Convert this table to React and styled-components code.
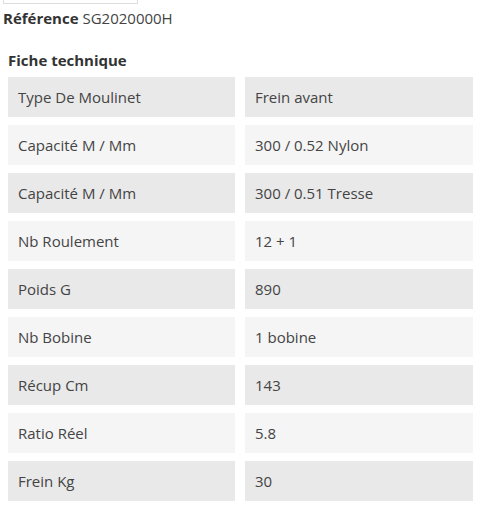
import styled, { createGlobalStyle } from "styled-components";

const Global = createGlobalStyle`
  body {
    margin: 0;
    background: #fff;
    font-family: "Open Sans", "Noto Sans", sans-serif;
    color: #444;
  }
`;

const Page = styled.div`
  width: 487px;
  padding: 0 0 0 3px;
  box-sizing: border-box;
`;

const InputEdge = styled.div`
  width: 133px;
  height: 3px;
  border: 1px solid #ddd;
  border-top: none;
`;

const Reference = styled.div`
  font-size: 15px;
  line-height: 22px;
  margin-top: 3px;
  color: #444;

  strong {
    font-weight: 700;
    color: #333;
  }
`;

const Section = styled.section`
  padding-left: 5px;
  margin-top: 20px;
`;

const Title = styled.h3`
  margin: 0 0 6px;
  font-size: 15px;
  line-height: 22px;
  font-weight: 700;
  color: #333;
`;

const Table = styled.div`
  display: grid;
  grid-template-columns: 227px 228px;
  column-gap: 10px;
  row-gap: 8px;
`;

const Cell = styled.div`
  height: 40px;
  display: flex;
  align-items: center;
  padding-left: 10px;
  font-size: 15px;
  color: #444;
  background: ${(p) => (p.$odd ? "#e9e9e9" : "#f5f5f5")};
`;

const rows = [
  ["Type De Moulinet", "Frein avant"],
  ["Capacité M / Mm", "300 / 0.52 Nylon"],
  ["Capacité M / Mm", "300 / 0.51 Tresse"],
  ["Nb Roulement", "12 + 1"],
  ["Poids G", "890"],
  ["Nb Bobine", "1 bobine"],
  ["Récup Cm", "143"],
  ["Ratio Réel", "5.8"],
  ["Frein Kg", "30"],
];

export default function App() {
  return (
    <Page>
      <Global />
      <InputEdge />
      <Reference>
        <strong>Référence</strong> SG2020000H
      </Reference>
      <Section>
        <Title>Fiche technique</Title>
        <Table>
          {rows.map(([label, value], i) => (
            <>
              <Cell key={`l${i}`} $odd={i % 2 === 0}>
                {label}
              </Cell>
              <Cell key={`v${i}`} $odd={i % 2 === 0}>
                {value}
              </Cell>
            </>
          ))}
        </Table>
      </Section>
    </Page>
  );
}
